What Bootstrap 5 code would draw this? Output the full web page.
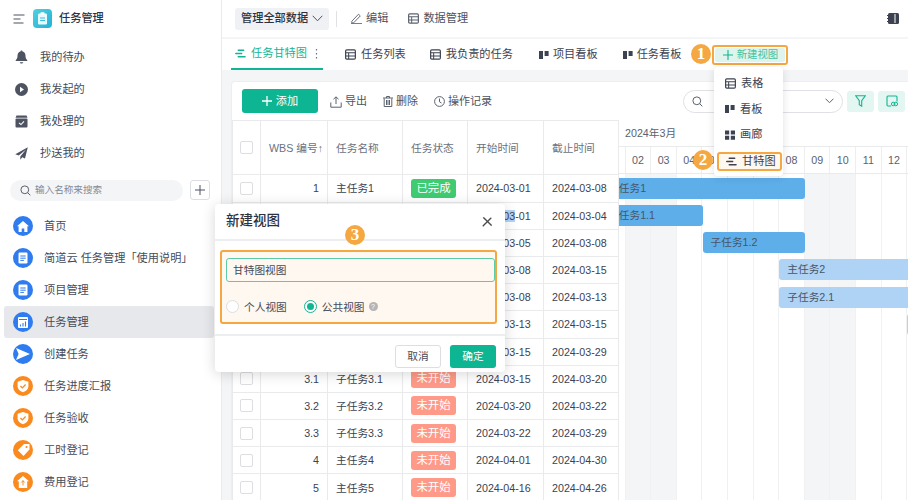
<!DOCTYPE html>
<html lang="zh-CN">
<head>
    <meta charset="UTF-8">
    <meta name="viewport" content="width=device-width, initial-scale=1.0">
    <title>任务管理</title>
    <link rel="stylesheet" href="https://cdn.jsdelivr.net/npm/bootstrap@5.3.0/dist/css/bootstrap.min.css">
    <style>
        html, body { height: 100%; }
        body {
            overflow: hidden;
            background: #f4f5f7;
            color: #3c4250;
            font-family: "Liberation Sans", "Noto Sans CJK SC", sans-serif;
            font-size: 11.2px;
        }
        svg { flex: none; display: block; }
        .page { width: 908px; height: 500px; overflow: hidden; }

        /* sidebar */
        .side { width: 222px; flex: none; background: #fff; border-right: 1px solid #e9eaec; }
        .side-head { height: 37px; padding-left: 13px; color: #2c3240; font-weight: 500; }
        .app-logo { width: 19px; height: 19px; border-radius: 4px; background: linear-gradient(135deg, #4fd0e0, #22b2d6); margin: 0 7px 0 8px; }
        .side-top { padding: 4px 0 11px; }
        .side-link { height: 32px; padding-left: 15px; color: #454b59; }
        .side-link svg { margin-right: 12px; }
        .side-find { padding: 0 11px 0 10px; height: 21px; margin-bottom: 9px; }
        .find-box { height: 21px; border-radius: 11px; background: #f4f5f7; padding-left: 10px; color: #858a96; font-size: 9.6px; }
        .find-add { width: 20px; height: 20px; border: 1px solid #dcdee2; border-radius: 3px; margin-left: 7px; }
        .app-link { height: 32px; margin: 0 7px 0 4px; padding-left: 9px; border-radius: 3px; color: #454b59; }
        .app-link.on { background: #e7e8eb; }
        .app-dot { width: 20px; height: 20px; border-radius: 50%; margin-right: 11px; }
        .dot-blue { background: #2f7bf0; }
        .dot-orange { background: #fb8a1e; }

        /* top bars */
        .top-bar { height: 37px; background: #fff; padding-left: 13px; margin-bottom: 2px; color: #4d5361; }
        .data-pick { height: 22px; width: 94px; background: #f0f1f4; border-radius: 3px; padding-left: 6px; color: #2c3240; font-weight: 500; margin-right: 7px; }
        .bar-sep { width: 1px; height: 16px; background: #dfe1e5; margin-right: 14px; }
        .tabs-bar { height: 31px; background: #fff; padding-left: 9px; color: #3c4250; }
        .tab-item { height: 31px; }
        .tab-item svg { margin-right: 5px; }
        .tab-item svg.board-mark { margin-right: 4px; }
        .tab-active { width: 92px; padding-left: 4px; color: #12b592; border-bottom: 2px solid #12b592; margin-right: 22px; }
        .tab-gap-a { margin-right: 25px; }
        .tab-gap-b { margin-right: 26px; }
        .new-view { width: 76px; height: 20px; margin-left: 31px; border: 2px solid #f5a742; border-radius: 3px; padding: 1px; }
        .new-view span { background: #dff4ec; color: #43c3a2; font-size: 10.4px; border-radius: 2px; }

        /* card */
        .gantt-card { margin: 11px 0 0 9px; background: #fff; border-radius: 4px 0 0 0; border: 1px solid #eceef0; border-width: 1px 0 0 1px; }
        .tool-row { height: 38px; padding: 0 0 0 10px; color: #4d5361; font-size: 11px; }
        .add-btn { width: 76px; height: 24px; background: #0db592; color: #fff; border-radius: 3px; margin-right: 12px; font-size: 11.2px; padding: 0; }
        .tool-item { padding-top: 1px; }
        .tool-item svg { margin-right: 3px; }
        .view-find { width: 160px; height: 23px; border: 1px solid #dfe1e5; border-radius: 12px; padding: 0 8px; margin-left: auto; }
        .tint-btn { width: 27px; height: 21px; background: #e3f6f1; border-radius: 3px; margin-left: 4px; }

        .task-table { table-layout: fixed; width: 386px; margin: 0; flex: none; color: #3c4250; border-color: #e9eaec; font-size: 10.7px; }
        .task-table th, .task-table td { padding: 0 8px; vertical-align: middle; font-weight: 400; white-space: nowrap; border-color: #e9eaec; }
        .task-table th { height: 54.4px; color: #6b717e; }
        .task-table td { height: 27.2px; }
        .task-table th:first-child, .task-table td:first-child { padding: 0; }
        .tick { width: 13px; height: 13px; border: 1px solid #dcdee2; border-radius: 2px; margin: 0 auto; }
        .state-tag { display: block; width: 45px; height: 19px; line-height: 19px; text-align: center; color: #fff; border-radius: 3px; font-size: 11.4px; }
        .state-done { background: #3ecb71; }
        .state-todo { background: #ff9a88; }
        .picked { background: #b3d4f7; }

        .chart { position: relative; width: 290px; flex: none; overflow: hidden; font-size: 10.7px; }
        .chart-month { height: 27.2px; padding-left: 6px; color: #5b616e; border-bottom: 1px solid #e9eaec; }
        .chart-days { height: 27.2px; margin-left: -18.9px; width: 340px; border-bottom: 1px solid #e9eaec; color: #5b616e; }
        .day-cell { width: 25.6px; flex: none; text-align: center; line-height: 26px; border-right: 1px solid #edeef0; }
        .chart-row { position: relative; height: 27.2px; }
        .chart-grid { position: absolute; top: 54.4px; bottom: 0; left: -18.9px; width: 340px; }
        .grid-day { width: 25.6px; flex: none; border-right: 1px solid #f0f1f3; }
        .grid-day.off { background: #f4f5f7; }
        .chart-bars { position: relative; }
        .task-bar { position: absolute; top: 3.5px; height: 21px; line-height: 21px; padding-left: 8px; border-radius: 3px; color: #4a5564; white-space: nowrap; overflow: hidden; }
        .bar-dark { background: #5eaeea; }
        .bar-light { background: #aed3f5; }

        /* overlays */
        .num-dot { position: absolute; width: 20px; height: 20px; line-height: 20px; border-radius: 50%; background: #f5a742; color: #fff; text-align: center; font-family: "Liberation Serif", serif; font-weight: 700; font-size: 17px; z-index: 30; }
        .view-menu { display: block; position: absolute; left: 714px; top: 67px; width: 69px; min-width: 0; height: 109px; padding: 4px 1px 4px 3px; border: 0; border-radius: 4px; box-shadow: 0 1px 8px rgba(0,0,0,.12); font-size: 11.2px; z-index: 20; }
        .menu-row { height: 25.5px; padding-left: 8px; color: #3c4250; }
        .menu-row svg { margin-right: 5px; }
        .menu-row.hit { height: 19px; margin-top: 4px; border: 2px solid #f5a742; border-radius: 3px; background: #fff8ee; padding-left: 7px; }
        .new-modal { position: absolute; left: 215px; top: 204px; width: 290px; height: 168px; background: #fff; border: 0; border-radius: 4px; box-shadow: 0 2px 14px rgba(0,0,0,.16); z-index: 20; }
        .new-modal .modal-header { height: 37px; flex: none; padding: 0 12px 0 11px; border-bottom: 2px solid #eceef0; }
        .new-modal h5 { font-size: 13.5px; font-weight: 500; color: #2c3240; margin: 0; }
        .new-modal .btn-close { width: 12px; height: 12px; padding: 0; margin: 0; background-size: 11px; opacity: .7; }
        .form-zone { margin: 9px 8px 0 5px; height: 74px; flex: none; padding: 5.5px 0 0 4px; background: #fef8f1; border: 2px solid #f5a742; border-radius: 3px; }
        .name-input { height: 24px; padding: 0 6px; font-size: 10.7px; color: #454b59; background: #fef8f1; border: 1px solid #5ccbaa; border-radius: 3px; }
        .radio-row { margin-top: 17px; color: #454b59; font-size: 10.7px; }
        .radio-mark { width: 13px; height: 13px; border-radius: 50%; border: 1px solid #dcdee2; margin-right: 5px; background: #fff; }
        .radio-mark.on { border-color: #12b592; margin-right: 5px; }
        .radio-mark.on i { display: block; width: 7px; height: 7px; border-radius: 50%; background: #12b592; margin: 2px; }
        .radio-gap { margin-right: 17px; }
        .hint-dot { width: 9px; height: 9px; line-height: 9px; border-radius: 50%; background: #b5b5b5; color: #fff; font-size: 7px; text-align: center; margin-left: 4px; }
        .new-modal .modal-footer { border-top: 2px solid #eceef0; margin-top: 10px; padding: 9px 9px 0 0; display: flex; justify-content: flex-end; gap: 9px; flex-wrap: nowrap; }
        .foot-btn { width: 46px; height: 23px; padding: 0; font-size: 10.7px; margin: 0 !important; border-radius: 3px; }
        .foot-cancel { border: 1px solid #dcdee2; background: #fff; color: #454b59; }
        .foot-ok { background: #0db592; color: #fff; border: 0; }
    </style>
</head>
<body>
<svg width="0" height="0" class="position-absolute">
    <symbol id="i-table" viewBox="0 0 12 12"><rect x=".7" y="1" width="10.6" height="10" rx="1.2" fill="none" stroke="currentColor" stroke-width="1.3"/><path d="M.7 4.2h10.6M.7 7.6h10.6M4 4.2V11" stroke="currentColor" stroke-width="1.1" fill="none"/></symbol>
    <symbol id="i-board" viewBox="0 0 10 10"><rect x="0" y="1" width="4" height="8" fill="currentColor"/><rect x="5.6" y="1" width="4" height="5" fill="currentColor"/></symbol>
    <symbol id="i-gantt" viewBox="0 0 12 12"><path d="M3.5 2.5h6M.8 6h6.5M3.5 9.5h7.5" stroke="currentColor" stroke-width="1.5" fill="none" stroke-linecap="round"/></symbol>
    <symbol id="i-doc" viewBox="0 0 20 20"><rect x="5.5" y="4.5" width="9" height="11" rx="1.2" fill="#fff"/><path d="M7.3 8h5.4M7.3 10.2h5.4M7.3 12.4h3.6" stroke="#2f7bf0" stroke-width="1"/></symbol>
    <symbol id="i-shield" viewBox="0 0 20 20"><path d="M10 4l5.4 1.8v4.4c0 3-2.3 5-5.4 6-3.100-1-5.400-3-5.400-6V5.800z" fill="#fff"/><path d="M7.500 10l1.900 1.900 3.200-3.400" fill="none" stroke="#fb8a1e" stroke-width="1.300"/></symbol>
</svg>

<div class="page d-flex position-relative">
    <aside class="side d-flex flex-column">
        <div class="side-head d-flex align-items-center">
            <svg width="12" height="10" viewBox="0 0 12 10"><path d="M.5 1h11M.5 5h7M.5 9h10" stroke="#4d5361" stroke-width="1.200"/></svg>
            <span class="app-logo d-flex align-items-center justify-content-center">
                <svg width="11" height="13" viewBox="0 0 11 13"><rect x="1" y="1.500" width="9" height="11" rx="1.200" fill="#fff" opacity=".9"/><rect x="3.500" y=".3" width="4" height="2.400" rx=".6" fill="#fff"/><path d="M3 6h5M3 8.500h5" stroke="#39c1dc" stroke-width="1"/></svg>
            </span>
            <span>任务管理</span>
        </div>
        <div class="side-top">
            <div class="side-link d-flex align-items-center">
                <svg width="13" height="14" viewBox="0 0 13 14"><path d="M6.500.5c.6 0 1 .4 1 1 2 .5 3 2.200 3 4.200 0 2 .5 3.300 1.800 4.500v.8H.7v-.8C2 9 2.500 7.700 2.500 5.700c0-2 1-3.700 3-4.200 0-.6.4-1 1-1zM4.700 12.200h3.600c-.3.800-1 1.300-1.800 1.300s-1.500-.5-1.800-1.300z" fill="#4d5361"/></svg>
                <span>我的待办</span>
            </div>
            <div class="side-link d-flex align-items-center">
                <svg width="13" height="13" viewBox="0 0 13 13"><circle cx="6.500" cy="6.500" r="6.500" fill="#4d5361"/><path d="M5 3.800l4 2.700-4 2.700z" fill="#fff"/></svg>
                <span>我发起的</span>
            </div>
            <div class="side-link d-flex align-items-center">
                <svg width="13" height="13" viewBox="0 0 13 13"><path d="M1.500.5h10l1 2.200H.5z" fill="#4d5361"/><rect x=".5" y="3.500" width="12" height="9" rx="1" fill="#4d5361"/><path d="M4 7.800l2 1.800 3-3.200" fill="none" stroke="#fff" stroke-width="1.100"/></svg>
                <span>我处理的</span>
            </div>
            <div class="side-link d-flex align-items-center">
                <svg width="13" height="13" viewBox="0 0 13 13"><path d="M12.800.3L.3 7.200l3.400 1.400L11 2.600 5.300 9.500v3.200l2-2.400 2.700 1.200z" fill="#4d5361"/></svg>
                <span>抄送我的</span>
            </div>
        </div>
        <div class="side-find d-flex">
            <div class="find-box flex-grow-1 d-flex align-items-center">
                <svg class="me-1" width="11" height="11" viewBox="0 0 11 11"><circle cx="4.800" cy="4.800" r="3.900" fill="none" stroke="#5b616e" stroke-width="1"/><path d="M7.700 7.700l2.600 2.600" stroke="#5b616e" stroke-width="1"/></svg>
                <span>输入名称来搜索</span>
            </div>
            <div class="find-add d-flex align-items-center justify-content-center">
                <svg width="10" height="10" viewBox="0 0 10 10"><path d="M5 0v10M0 5h10" stroke="#4d5361" stroke-width="1"/></svg>
            </div>
        </div>
        <div class="app-link d-flex align-items-center">
            <span class="app-dot dot-blue d-flex align-items-center justify-content-center"><svg width="12" height="11" viewBox="0 0 12 11"><path d="M6 0l6 5.200h-1.600V11H7.300V7.500H4.700V11H1.600V5.200H0z" fill="#fff"/></svg></span><span>首页</span>
        </div>
        <div class="app-link d-flex align-items-center">
            <span class="app-dot dot-blue"><svg width="20" height="20"><use href="#i-doc"/></svg></span><span>简道云 任务管理「使用说明」</span>
        </div>
        <div class="app-link d-flex align-items-center">
            <span class="app-dot dot-blue"><svg width="20" height="20"><use href="#i-doc"/></svg></span><span>项目管理</span>
        </div>
        <div class="app-link on d-flex align-items-center">
            <span class="app-dot dot-blue d-flex align-items-center justify-content-center"><svg width="10" height="11" viewBox="0 0 10 11"><rect width="10" height="11" rx="1" fill="#fff"/><path d="M1 2.500h8" stroke="#2f7bf0"/><path d="M2.500 9.500V7.500M5 9.500V6M7.500 9.500V4.500" stroke="#2f7bf0" stroke-width="1.100"/></svg></span><span>任务管理</span>
        </div>
        <div class="app-link d-flex align-items-center">
            <span class="app-dot dot-blue d-flex align-items-center justify-content-center"><svg width="14" height="12" viewBox="0 0 14 12"><path d="M0 0l14 6-14 6 2.600-6z" fill="#fff"/></svg></span><span>创建任务</span>
        </div>
        <div class="app-link d-flex align-items-center">
            <span class="app-dot dot-orange"><svg width="20" height="20"><use href="#i-shield"/></svg></span><span>任务进度汇报</span>
        </div>
        <div class="app-link d-flex align-items-center">
            <span class="app-dot dot-orange"><svg width="20" height="20"><use href="#i-shield"/></svg></span><span>任务验收</span>
        </div>
        <div class="app-link d-flex align-items-center">
            <span class="app-dot dot-orange d-flex align-items-center justify-content-center"><svg width="13" height="12" viewBox="0 0 13 12"><path d="M7 0h5.500v5.500L6.500 12 .8 6.200z" fill="#fff"/><circle cx="9.500" cy="3" r="1.100" fill="#fb8a1e"/></svg></span><span>工时登记</span>
        </div>
        <div class="app-link d-flex align-items-center">
            <span class="app-dot dot-orange d-flex align-items-center justify-content-center"><svg width="12" height="12" viewBox="0 0 12 12"><path d="M6 0l6 5.200h-1.800V12H1.800V5.200H0z" fill="#fff"/><path d="M6 4.500v5M4.300 6.500L6 4.700l1.700 1.800" fill="none" stroke="#fb8a1e"/></svg></span><span>费用登记</span>
        </div>
    </aside>

    <main class="flex-grow-1 overflow-hidden">
        <div class="top-bar d-flex align-items-center">
            <div class="data-pick d-flex align-items-center">
                <span>管理全部数据</span>
                <svg class="ms-1" width="11" height="7" viewBox="0 0 11 7"><path d="M.7.8l4.800 5 4.800-5" fill="none" stroke="#4d5361" stroke-width="1"/></svg>
            </div>
            <span class="bar-sep"></span>
            <svg class="me-1" width="11" height="11" viewBox="0 0 11 11"><path d="M.8 8.300L7.500 1.200l1.800 1.700-6.800 7H.8zM0 10.600h11" fill="none" stroke="#5b616e" stroke-width=".9"/></svg>
            <span class="me-3 pe-1">编辑</span>
            <svg class="me-1" width="11" height="11" style="color:#5b616e"><use href="#i-table"/></svg>
            <span>数据管理</span>
            <svg class="ms-auto" width="12" height="11" viewBox="0 0 12 11" style="margin-right:9px"><rect x="1" width="11" height="11" rx="1.500" fill="#3c4250"/><path d="M8 1v9" stroke="#fff"/><path d="M0 2.500h1.500M0 5.500h1.500M0 8.500h1.500" stroke="#3c4250"/></svg>
        </div>
        <div class="tabs-bar d-flex align-items-center">
            <div class="tab-item tab-active d-flex align-items-center">
                <svg width="11" height="11"><use href="#i-gantt"/></svg>
                <span>任务甘特图</span>
                <svg class="ms-2" width="3" height="10" viewBox="0 0 3 10"><path d="M1.500 0v1.500M1.500 4v1.500M1.500 8v1.500" stroke="#6b717e" stroke-width="1.200"/></svg>
            </div>
            <div class="tab-item d-flex align-items-center me-4"><svg width="11" height="11"><use href="#i-table"/></svg><span>任务列表</span></div>
            <div class="tab-item d-flex align-items-center tab-gap-b"><svg width="11" height="11"><use href="#i-table"/></svg><span>我负责的任务</span></div>
            <div class="tab-item d-flex align-items-center tab-gap-a"><svg class="board-mark" width="10" height="10"><use href="#i-board"/></svg><span>项目看板</span></div>
            <div class="tab-item d-flex align-items-center"><svg class="board-mark" width="10" height="10"><use href="#i-board"/></svg><span>任务看板</span></div>
            <div class="new-view d-flex">
                <span class="flex-grow-1 d-flex align-items-center justify-content-center">
                    <svg class="me-1" width="10" height="10" viewBox="0 0 10 10"><path d="M5 0v10M0 5h10" stroke="#12b592" stroke-width="1.100"/></svg>新建视图
                </span>
            </div>
        </div>

        <section class="gantt-card">
            <div class="tool-row d-flex align-items-center">
                <button class="btn add-btn d-flex align-items-center justify-content-center">
                    <svg class="me-1" width="10" height="10" viewBox="0 0 10 10"><path d="M5 0v10M0 5h10" stroke="#fff" stroke-width="1.300"/></svg>添加
                </button>
                <div class="tool-item d-flex align-items-center me-3">
                    <svg width="12" height="12" viewBox="0 0 12 12"><path d="M6 8V1M3.500 3.200L6 .8l2.500 2.400M.8 6.500v4.700h10.400V6.500" fill="none" stroke="#5b616e" stroke-width="1"/></svg><span>导出</span>
                </div>
                <div class="tool-item d-flex align-items-center me-3">
                    <svg width="10" height="11" viewBox="0 0 10 11"><path d="M0 2h10M3.500 2V.5h3V2M1.200 2.500v8h7.600v-8M3.500 4v5M5 4v5M6.500 4v5" fill="none" stroke="#5b616e" stroke-width="1"/></svg><span>删除</span>
                </div>
                <div class="tool-item d-flex align-items-center">
                    <svg width="11" height="11" viewBox="0 0 11 11"><circle cx="5.500" cy="5.500" r="4.900" fill="none" stroke="#5b616e" stroke-width="1"/><path d="M5.500 2.500v3.300l2 1.200" fill="none" stroke="#5b616e" stroke-width="1"/></svg><span>操作记录</span>
                </div>
                <div class="view-find d-flex align-items-center">
                    <svg width="11" height="11" viewBox="0 0 11 11"><circle cx="4.800" cy="4.800" r="3.900" fill="none" stroke="#5b616e" stroke-width="1"/><path d="M7.700 7.700l2.600 2.600" stroke="#5b616e" stroke-width="1"/></svg>
                    <svg class="ms-auto" width="9" height="6" viewBox="0 0 9 6"><path d="M.5.700l4 4 4-4" fill="none" stroke="#5b616e" stroke-width="1"/></svg>
                </div>
                <div class="tint-btn d-flex align-items-center justify-content-center">
                    <svg width="11" height="12" viewBox="0 0 11 12"><path d="M.7.800h9.600L6.700 5.800v5.400L4.300 9.600V5.800z" fill="none" stroke="#12b592" stroke-width="1.100"/></svg>
                </div>
                <div class="tint-btn d-flex align-items-center justify-content-center" style="margin-right:3px">
                    <svg width="12" height="12" viewBox="0 0 12 12"><path d="M5 11H2a1 1 0 0 1-1-1V2a1 1 0 0 1 1-1h8a1 1 0 0 1 1 1v4.500" fill="none" stroke="#12b592" stroke-width="1.100"/><circle cx="7.200" cy="9" r="1.800" fill="none" stroke="#12b592"/><circle cx="9.800" cy="9" r="1.800" fill="none" stroke="#12b592"/></svg>
                </div>
            </div>
            <div class="d-flex">
                <table class="table table-bordered task-table">
                    <colgroup><col style="width:28px"><col style="width:67px"><col style="width:75px"><col style="width:65px"><col style="width:76px"><col style="width:75px"></colgroup>
                    <thead>
                        <tr>
                            <th><div class="tick"></div></th><th>WBS 编号↑</th><th>任务名称</th><th>任务状态</th><th>开始时间</th><th>截止时间</th>
                        </tr>
                    </thead>
                    <tbody id="taskRows"></tbody>
                </table>
                <div class="chart">
                    <div class="chart-month d-flex align-items-center">2024年3月</div>
                    <div class="chart-days d-flex" id="dayCells"></div>
                    <div class="chart-grid d-flex" id="gridDays"></div>
                    <div class="chart-bars" id="chartBars"></div>
                </div>
            </div>
        </section>
    </main>

    <ul class="dropdown-menu view-menu list-unstyled">
        <li class="menu-row d-flex align-items-center"><svg width="11" height="11"><use href="#i-table"/></svg>表格</li>
        <li class="menu-row d-flex align-items-center"><svg width="10" height="10"><use href="#i-board"/></svg>看板</li>
        <li class="menu-row d-flex align-items-center"><svg width="10" height="10" viewBox="0 0 10 10"><path d="M0 .5h4.200v4H0zM5.800 .5H10v4H5.800zM0 5.800h4.200v4H0zM5.800 5.800H10v4H5.800z" fill="currentColor"/></svg>画廊</li>
        <li class="menu-row hit d-flex align-items-center"><svg width="11" height="11"><use href="#i-gantt"/></svg>甘特图</li>
    </ul>

    <div class="modal-content new-modal">
        <div class="modal-header">
            <h5>新建视图</h5>
            <button type="button" class="btn-close"></button>
        </div>
        <div class="form-zone">
            <input class="form-control name-input" value="甘特图视图">
            <div class="radio-row d-flex align-items-center">
                <span class="radio-mark"></span><span class="radio-gap">个人视图</span>
                <span class="radio-mark on"><i></i></span><span>公共视图</span><span class="hint-dot">?</span>
            </div>
        </div>
        <div class="modal-footer">
            <button class="btn foot-btn foot-cancel">取消</button>
            <button class="btn foot-btn foot-ok">确定</button>
        </div>
    </div>

    <span class="num-dot" style="left:691px;top:44px">1</span>
    <span class="num-dot" style="left:693px;top:150px">2</span>
    <span class="num-dot" style="left:345px;top:225px">3</span>
</div>

<script src="https://cdn.jsdelivr.net/npm/bootstrap@5.3.0/dist/js/bootstrap.bundle.min.js"></script>
<script>
    const dayWidth = 25.6;
    const tasks = [
        ['1', '主任务1', 'done', '03-01', '03-08'],
        ['1.1', '子任务1.1', 'done', '03-01', '03-04'],
        ['1.2', '子任务1.2', 'todo', '03-05', '03-08'],
        ['2', '主任务2', 'todo', '03-08', '03-15'],
        ['2.1', '子任务2.1', 'todo', '03-08', '03-13'],
        ['2.2', '子任务2.2', 'todo', '03-13', '03-15'],
        ['3', '主任务3', 'todo', '03-15', '03-29'],
        ['3.1', '子任务3.1', 'todo', '03-15', '03-20'],
        ['3.2', '子任务3.2', 'todo', '03-20', '03-22'],
        ['3.3', '子任务3.3', 'todo', '03-22', '03-29'],
        ['4', '主任务4', 'todo', '04-01', '04-30'],
        ['5', '主任务5', 'todo', '04-16', '04-26']
    ];

    document.getElementById('taskRows').innerHTML = tasks.map((t, i) => `
        <tr>
            <td><div class="tick"></div></td>
            <td class="text-end">${t[0]}</td>
            <td>${t[1]}</td>
            <td><span class="state-tag ${t[2] === 'done' ? 'state-done' : 'state-todo'}">${t[2] === 'done' ? '已完成' : '未开始'}</span></td>
            <td>2024-${i === 1 ? '<span class="picked">03</span>-01' : t[3]}</td>
            <td>2024-${t[4]}</td>
        </tr>`).join('');

    let dayHtml = '', gridHtml = '';
    for (let d = 1; d <= 13; d++) {
        const off = [2, 3, 9, 10].includes(d);
        dayHtml += `<div class="day-cell">${String(d).padStart(2, '0')}</div>`;
        gridHtml += `<div class="grid-day${off ? ' off' : ''}"></div>`;
    }
    document.getElementById('dayCells').innerHTML = dayHtml;
    document.getElementById('gridDays').innerHTML = gridHtml;

    // only march bars that reach the visible part of the chart
    document.getElementById('chartBars').innerHTML = tasks.map((t, i) => {
        if (i > 5) return '<div class="chart-row"></div>';
        const start = parseInt(t[3].slice(3));
        const end = parseInt(t[4].slice(3));
        const left = (start - 1) * dayWidth - 18.9;
        const width = (end - start + 1) * dayWidth;
        return `<div class="chart-row"><div class="task-bar ${i < 3 ? 'bar-dark' : 'bar-light'}" style="left:${left}px;width:${width}px">${t[1]}</div></div>`;
    }).join('');
</script>
</body>
</html>
